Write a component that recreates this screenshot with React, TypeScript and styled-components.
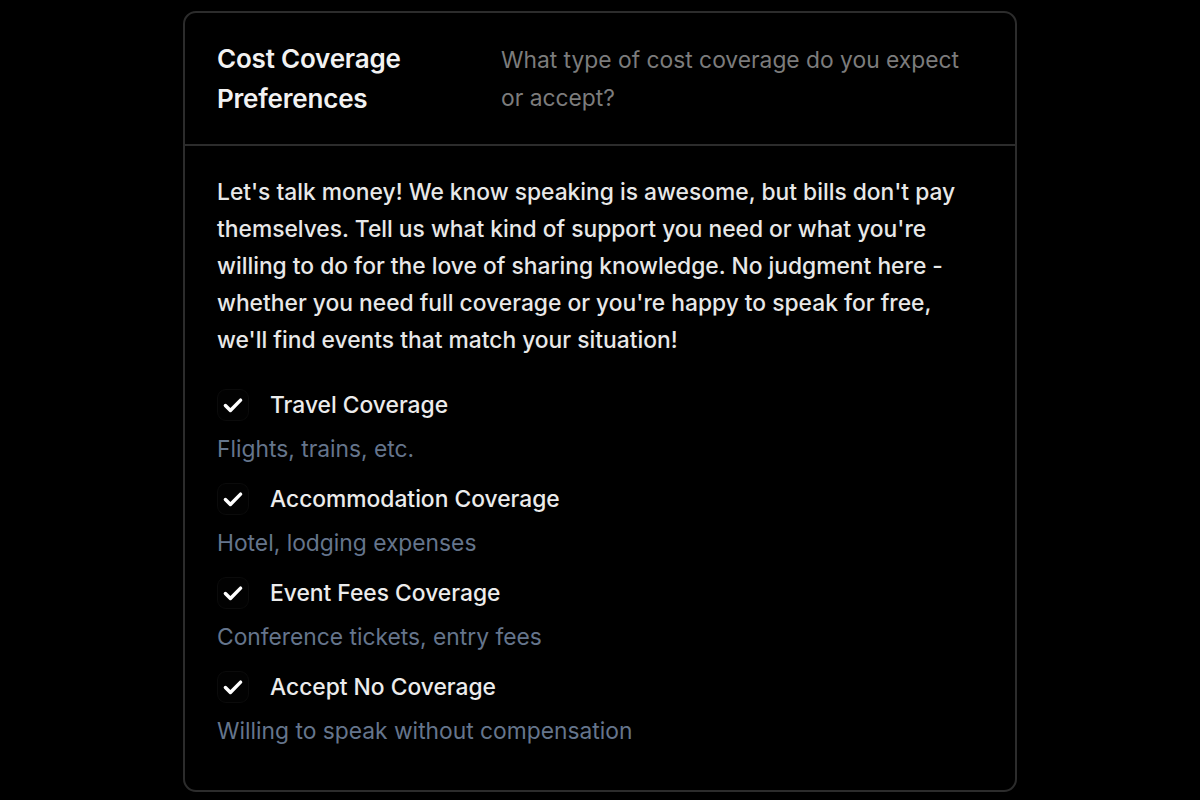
import React from 'react';
import styled, { createGlobalStyle } from 'styled-components';

const GlobalStyle = createGlobalStyle`
	html, body {
		margin: 0;
		padding: 0;
		background: #000;
	}
	body {
		font-family: Inter, 'Noto Sans', sans-serif;
		-webkit-font-smoothing: antialiased;
	}
`;

const options = [
	{ label: 'Travel Coverage', hint: 'Flights, trains, etc.' },
	{ label: 'Accommodation Coverage', hint: 'Hotel, lodging expenses' },
	{ label: 'Event Fees Coverage', hint: 'Conference tickets, entry fees' },
	{ label: 'Accept No Coverage', hint: 'Willing to speak without compensation' },
];

const Check = () => (
	<svg width='26' height='26' viewBox='0 0 24 24' fill='none'>
		<path
			d='M5 12.5l4.6 4.6L19 7.5'
			stroke='#fff'
			strokeWidth='3.2'
			strokeLinecap='round'
			strokeLinejoin='round'
		/>
	</svg>
);

export default function App() {
	return (
		<>
			<GlobalStyle />
			<Page>
				<Card>
					<Header>
						<Title>Cost Coverage Preferences</Title>
						<Subtitle>What type of cost coverage do you expect or accept?</Subtitle>
					</Header>
					<Body>
						<Intro>
							Let's talk money! We know speaking is awesome, but bills don't pay
							themselves. Tell us what kind of support you need or what you're
							willing to do for the love of sharing knowledge. No judgment here -
							whether you need full coverage or you're happy to speak for free,
							we'll find events that match your situation!
						</Intro>
						<OptionList>
							{options.map((o) => (
								<Option key={o.label}>
									<OptionRow>
										<CheckBox>
											<Check />
										</CheckBox>
										<Label>{o.label}</Label>
									</OptionRow>
									<Hint>{o.hint}</Hint>
								</Option>
							))}
						</OptionList>
					</Body>
				</Card>
			</Page>
		</>
	);
}

const Page = styled.div`
	display: flex;
	justify-content: center;
	align-items: flex-start;
	padding-top: 11px;
`;

const Card = styled.div`
	width: 834px;
	box-sizing: border-box;
	border: 2px solid #2c2c2c;
	border-radius: 13px;
	background: #000;
`;

const Header = styled.div`
	display: grid;
	grid-template-columns: 250px 1fr;
	column-gap: 34px;
	padding: 26px 32px 25px;
	border-bottom: 2px solid #2c2c2c;
`;

const Title = styled.h2`
	margin: 0;
	font-size: 26px;
	line-height: 40px;
	font-weight: 600;
	color: #f2f2f2;
	letter-spacing: -0.2px;
`;

const Subtitle = styled.p`
	margin: 2px 0 0;
	font-size: 22.8px;
	line-height: 38px;
	font-weight: 400;
	color: #7c7c7c;
`;

const Body = styled.div`
	padding: 27px 32px 41px;
`;

const Intro = styled.p`
	margin: 0 0 30px;
	font-size: 22.8px;
	line-height: 37px;
	font-weight: 500;
	color: #e8e8e8;
`;

const OptionList = styled.div`
	display: flex;
	flex-direction: column;
	gap: 15px;
`;

const Option = styled.div`
	display: flex;
	flex-direction: column;
	gap: 9px;
`;

const OptionRow = styled.div`
	display: flex;
	align-items: center;
	gap: 21px;
	height: 34px;
`;

const CheckBox = styled.span`
	display: flex;
	align-items: center;
	justify-content: center;
	width: 32px;
	height: 32px;
	box-sizing: border-box;
	border: 1px solid #0b0b0b;
	border-radius: 9px;
	background: #020202;
`;

const Label = styled.span`
	font-size: 22.8px;
	line-height: 34px;
	font-weight: 500;
	color: #ececec;
`;

const Hint = styled.span`
	font-size: 22.8px;
	line-height: 36px;
	color: #65758c;
`;
